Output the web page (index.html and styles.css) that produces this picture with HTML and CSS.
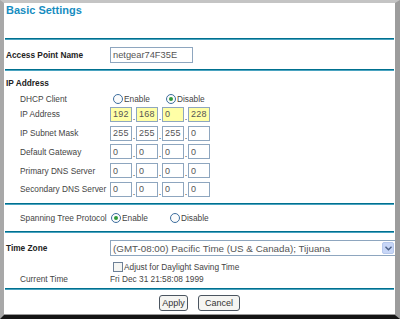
FILE: index.html
```html
<!DOCTYPE html>
<html lang="en">
<head>
  <meta charset="UTF-8">
  <title>Basic Settings</title>
  <link rel="stylesheet" href="styles.css">
</head>
<body>
  <div class="window">
    <div class="page">
      <h1 class="title">Basic Settings</h1>
      <div class="rule"></div>

      <div class="row row-ap">
        <span class="label bold">Access Point Name</span>
        <input type="text" class="field name" value="netgear74F35E">
      </div>
      <div class="rule"></div>

      <div class="section-head">IP Address</div>
      <div class="row row-dhcp">
        <span class="label sub">DHCP Client</span>
        <label class="opt opt-dhcp"><input type="radio" name="dhcp"> Enable</label>
        <label class="opt"><input type="radio" name="dhcp" checked> Disable</label>
      </div>

      <div class="row ip-row">
        <span class="label sub">IP Address</span>
        <div class="ip">
          <input type="text" class="field oct hl" value="192"><span class="dot">.</span>
          <input type="text" class="field oct hl" value="168"><span class="dot">.</span>
          <input type="text" class="field oct hl" value="0"><span class="dot">.</span>
          <input type="text" class="field oct hl" value="228">
        </div>
      </div>
      <div class="row ip-row">
        <span class="label sub">IP Subnet Mask</span>
        <div class="ip">
          <input type="text" class="field oct" value="255"><span class="dot">.</span>
          <input type="text" class="field oct" value="255"><span class="dot">.</span>
          <input type="text" class="field oct" value="255"><span class="dot">.</span>
          <input type="text" class="field oct" value="0">
        </div>
      </div>
      <div class="row ip-row">
        <span class="label sub">Default Gateway</span>
        <div class="ip">
          <input type="text" class="field oct" value="0"><span class="dot">.</span>
          <input type="text" class="field oct" value="0"><span class="dot">.</span>
          <input type="text" class="field oct" value="0"><span class="dot">.</span>
          <input type="text" class="field oct" value="0">
        </div>
      </div>
      <div class="row ip-row">
        <span class="label sub">Primary DNS Server</span>
        <div class="ip">
          <input type="text" class="field oct" value="0"><span class="dot">.</span>
          <input type="text" class="field oct" value="0"><span class="dot">.</span>
          <input type="text" class="field oct" value="0"><span class="dot">.</span>
          <input type="text" class="field oct" value="0">
        </div>
      </div>
      <div class="row ip-row">
        <span class="label sub">Secondary DNS Server</span>
        <div class="ip">
          <input type="text" class="field oct" value="0"><span class="dot">.</span>
          <input type="text" class="field oct" value="0"><span class="dot">.</span>
          <input type="text" class="field oct" value="0"><span class="dot">.</span>
          <input type="text" class="field oct" value="0">
        </div>
      </div>
      <div class="rule rule-after-ip"></div>

      <div class="row row-stp">
        <span class="label sub">Spanning Tree Protocol</span>
        <label class="opt opt-stp"><input type="radio" name="stp" checked> Enable</label>
        <label class="opt"><input type="radio" name="stp"> Disable</label>
      </div>
      <div class="rule"></div>

      <div class="row row-tz">
        <span class="label bold">Time Zone</span>
        <div class="select">
          <span class="select-text">(GMT-08:00) Pacific Time (US &amp; Canada); Tijuana</span>
          <span class="select-btn">
            <svg width="7" height="5" viewBox="0 0 7 5"><path d="M0.5 0.8 L3.5 3.8 L6.5 0.8" fill="none" stroke="#4d6185" stroke-width="1.4"/></svg>
          </span>
        </div>
      </div>
      <div class="row row-check">
        <span class="label"></span>
        <label class="check"><input type="checkbox"> Adjust for Daylight Saving Time</label>
      </div>
      <div class="row row-time">
        <span class="label sub">Current Time</span>
        <span class="value">Fri Dec 31 21:58:08 1999</span>
      </div>
      <div class="rule rule-last"></div>

      <div class="buttons">
        <button class="btn btn-apply">Apply</button>
        <button class="btn btn-cancel">Cancel</button>
      </div>
    </div>
  </div>
</body>
</html>
```

FILE: styles.css
```css
body {
  margin: 0;
  padding: 0;
  background-color: #fff;
  font-family: "Liberation Sans", Arial, sans-serif;
  color: #333;
}
.window {
  width: 400px;
  height: 319px;
  box-sizing: border-box;
  border-top: 3px solid #c4c4c4;
  border-left: 4px solid #a8a8a8;
  border-right: 5px solid #9c9c9c;
  border-bottom: 4px solid #151515;
  display: flex;
  flex-direction: column;
  overflow: hidden;
}
.page {
  flex: 1;
  background-color: #fff;
  border-bottom: 1px solid #9a9a9a;
}
.title {
  margin: 0;
  height: 35px;
  box-sizing: border-box;
  padding: 1px 0 0 2px;
  font-size: 11px;
  line-height: 13px;
  font-weight: bold;
  color: #178dbf;
}
.rule {
  height: 2px;
  box-sizing: border-box;
  margin: 0 1px 0 1px;
  border-top: 1px solid #00708f;
  border-bottom: 1px solid #4aa3c0;
}
.rule-after-ip {
  margin-top: 4.25px;
}
.rule-last {
  margin-top: 1px;
}
.row {
  display: flex;
  align-items: center;
}
.label {
  width: 106px;
  flex-shrink: 0;
  box-sizing: border-box;
  font-size: 8.3px;
  white-space: nowrap;
}
.label.bold {
  padding-left: 2px;
  font-weight: bold;
  color: #222;
}
.label.sub {
  padding-left: 16px;
  color: #444;
}
.section-head {
  margin-top: 3px;
  height: 18px;
  display: flex;
  align-items: center;
  padding-left: 2px;
  font-size: 8.3px;
  font-weight: bold;
  color: #222;
}
.row-ap {
  height: 29px;
}
.row-dhcp {
  height: 13px;
}
.ip-row {
  height: 18.75px;
}
.row-stp {
  height: 26px;
}
.row-tz {
  padding-top: 7px;
  height: 16px;
}
.row-check {
  margin-top: 6px;
  height: 9px;
}
.row-time {
  height: 16px;
}
.field {
  box-sizing: border-box;
  margin: 0;
  border: 1px solid #8ea6bf;
  background-color: #fff;
  font-family: "Liberation Sans", Arial, sans-serif;
  color: #555;
  outline: none;
}
.name {
  width: 83px;
  height: 16px;
  padding: 0 0 0 2px;
  font-size: 9.3px;
}
.ip {
  display: flex;
  align-items: center;
}
.oct {
  width: 22px;
  height: 15px;
  padding: 0 0 0 2px;
  font-size: 9px;
  letter-spacing: 0.3px;
}
.oct.hl {
  background-color: #ffffa6;
}
.dot {
  width: 4px;
  text-align: center;
  font-size: 9px;
  color: #333;
  align-self: flex-end;
  line-height: 9px;
}
.opt {
  display: flex;
  align-items: center;
  font-size: 8.3px;
  color: #444;
  white-space: nowrap;
}
.opt-dhcp {
  margin-left: 3px;
  width: 53px;
}
.opt-stp {
  margin-left: 1px;
  width: 59px;
}
.opt input[type="radio"] {
  appearance: none;
  margin: 0 1px 0 0;
  width: 10px;
  height: 10px;
  border: 1px solid #3d6e9e;
  border-radius: 50%;
  background-color: #fbfbfb;
  display: grid;
  place-items: center;
}
.opt input[type="radio"]:checked::after {
  content: "";
  width: 4px;
  height: 4px;
  border-radius: 50%;
  background-color: #2f9a3a;
}
.select {
  flex: 1;
  height: 16px;
  box-sizing: border-box;
  border: 1px solid #8ea6bf;
  display: flex;
  align-items: center;
  margin-right: -1px;
}
.select-text {
  flex: 1;
  padding-left: 2px;
  font-size: 9.8px;
  color: #555;
  white-space: nowrap;
  overflow: hidden;
}
.select-btn {
  width: 12px;
  height: 12px;
  margin-right: 1px;
  border: 1px solid #b6c8ec;
  border-radius: 2px;
  background-color: #c7d6f7;
  display: flex;
  align-items: center;
  justify-content: center;
  box-sizing: border-box;
}
.check {
  display: flex;
  align-items: center;
  margin-left: 3px;
  font-size: 8.3px;
  color: #444;
  white-space: nowrap;
}
.check input {
  appearance: none;
  margin: 0 1px 0 0;
  width: 10px;
  height: 10px;
  border: 1px solid #6e8197;
  background-color: #f6f6f3;
}
.value {
  font-size: 8.3px;
  color: #444;
  white-space: nowrap;
}
.buttons {
  display: flex;
  justify-content: center;
  gap: 10px;
  padding-top: 5px;
}
.btn {
  height: 16px;
  box-sizing: border-box;
  padding: 0;
  border: 1px solid #4b5560;
  border-radius: 3px;
  background-color: #f5f5f2;
  font-family: "Liberation Sans", Arial, sans-serif;
  font-size: 9px;
  color: #333;
}
.btn-apply {
  width: 29px;
}
.btn-cancel {
  width: 42px;
}
```
